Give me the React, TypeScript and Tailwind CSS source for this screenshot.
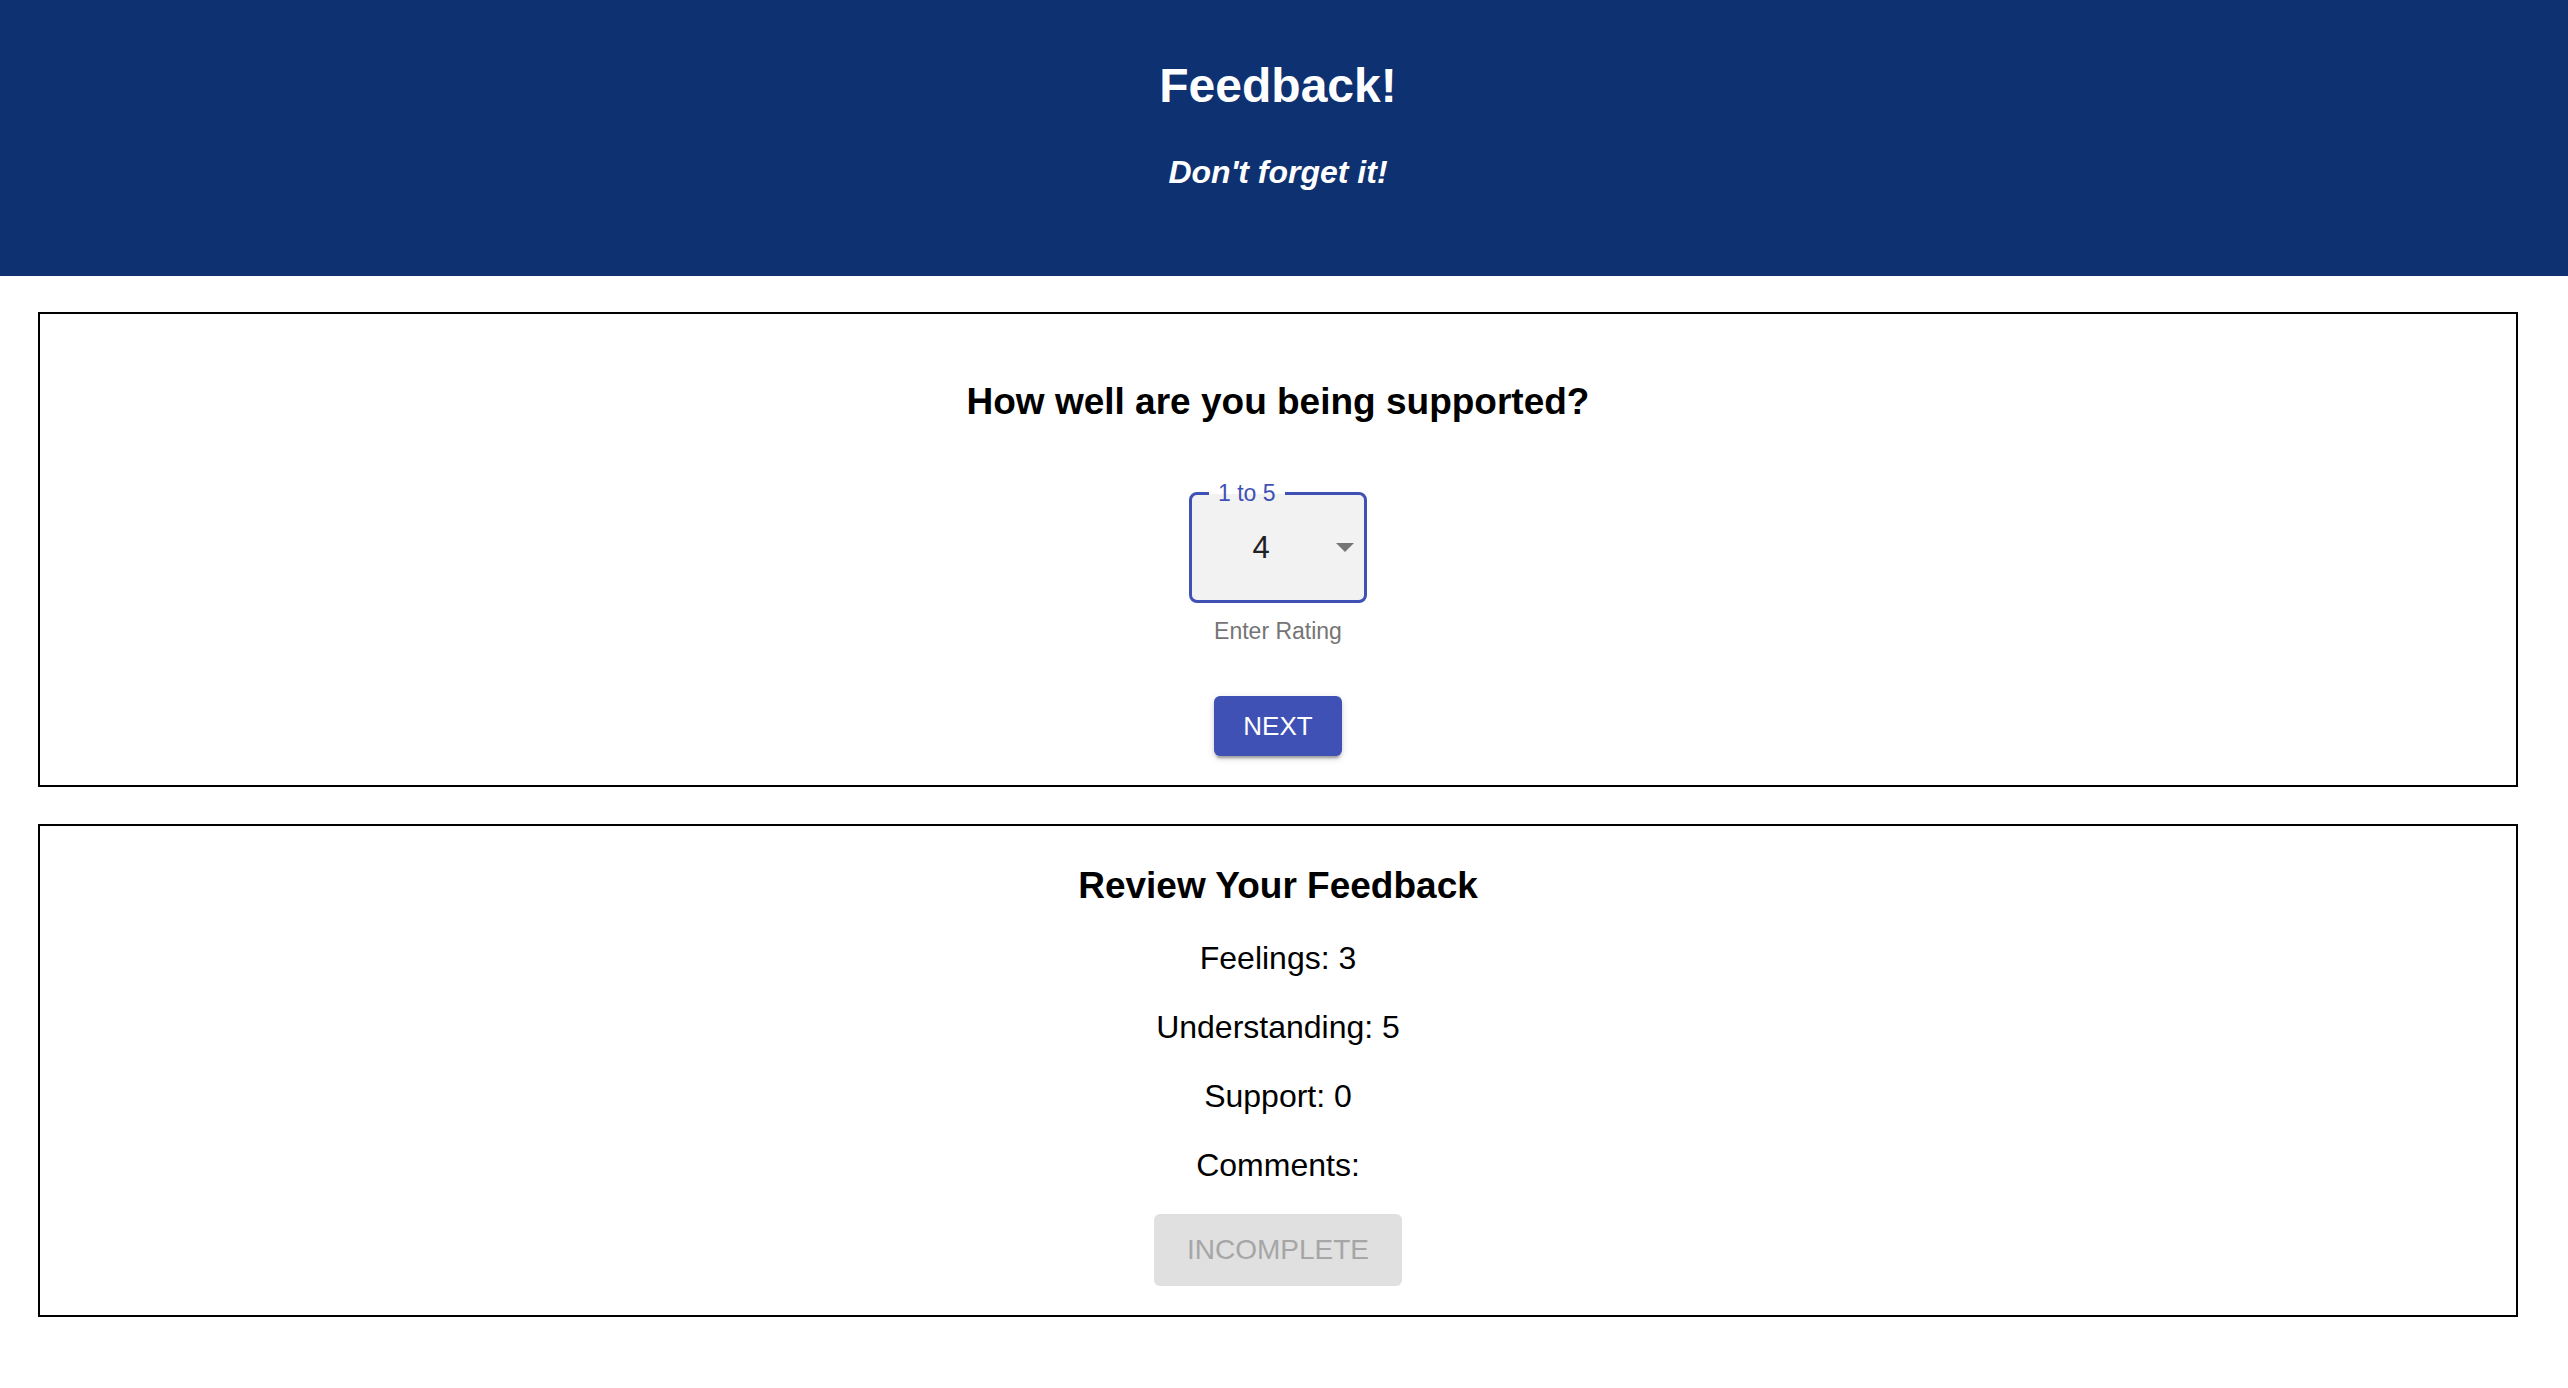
const review = [
    { label: "Feelings", value: "3" },
    { label: "Understanding", value: "5" },
    { label: "Support", value: "0" },
    { label: "Comments", value: "" },
];

const RatingSelect = () => {
    return (
        <div className="flex flex-col items-center">
            {/* outlined select with floating label */}
            <div className="relative flex h-[111px] w-[178px] items-center rounded-[8px] border-[3px] border-[#3f51b5] bg-[#f2f2f2] pl-[23px] pr-[10px]">
                <span className="absolute left-[17px] top-[-13px] bg-[linear-gradient(to_bottom,#ffffff_50%,#f2f2f2_50%)] px-[9px] text-[23px] leading-[23px] text-[#3f51b5]">
                    1 to 5
                </span>
                <span className="flex-1 text-center text-[31px] leading-[36px] text-[#212121]">4</span>
                <svg width="18" height="9" viewBox="0 0 18 9" className="ml-[29px]">
                    <polygon points="0,0 18,0 9,9" fill="#757575" />
                </svg>
            </div>
            <p className="mt-[15px] text-[23px] leading-[27px] text-[#757575]">Enter Rating</p>
        </div>
    );
};

const App = () => {
    return (
        <div className="min-h-screen bg-white font-['Liberation_Sans',Arial,Helvetica,sans-serif] text-black">
            <header className="bg-[#0e3172] pb-[85px] pr-[12px] pt-[58px] text-center text-white">
                <h1 className="text-[48px] font-bold leading-[55px]">Feedback!</h1>
                <h4 className="mt-[41px] text-[32px] font-bold italic leading-[37px]">Don't forget it!</h4>
            </header>

            <main className="ml-[38px] mr-[50px] pb-[70px]">
                {/* Question card */}
                <section className="mt-[36px] flex flex-col items-center border-2 border-black pb-[29px] pt-[66px]">
                    <h2 className="text-[37px] font-bold leading-[43px]">How well are you being supported?</h2>
                    <div className="mt-[69px]">
                        <RatingSelect />
                    </div>
                    <button className="mt-[51px] h-[60px] rounded-[6px] bg-[#3f51b5] px-[29px] text-[26px] leading-[30px] text-white shadow-[0_5px_2px_-3px_rgba(0,0,0,0.2),0_3px_3px_0_rgba(0,0,0,0.14),0_2px_8px_0_rgba(0,0,0,0.12)]">
                        NEXT
                    </button>
                </section>

                {/* Review card */}
                <section className="mt-[37px] flex flex-col items-center border-2 border-black pb-[29px] pt-[38px]">
                    <h2 className="text-[37px] font-bold leading-[43px]">Review Your Feedback</h2>
                    <div className="mt-[33px] flex flex-col items-center gap-[32px]">
                        {review.map((row) => (
                            <p key={row.label} className="text-[32px] leading-[37px]">
                                {row.label}: {row.value}
                            </p>
                        ))}
                    </div>
                    <button
                        disabled
                        className="mt-[30px] h-[72px] rounded-[6px] bg-[#e0e0e0] px-[33px] text-[28px] leading-[32px] text-[#a6a6a6]"
                    >
                        INCOMPLETE
                    </button>
                </section>
            </main>
        </div>
    );
};

export default App;
